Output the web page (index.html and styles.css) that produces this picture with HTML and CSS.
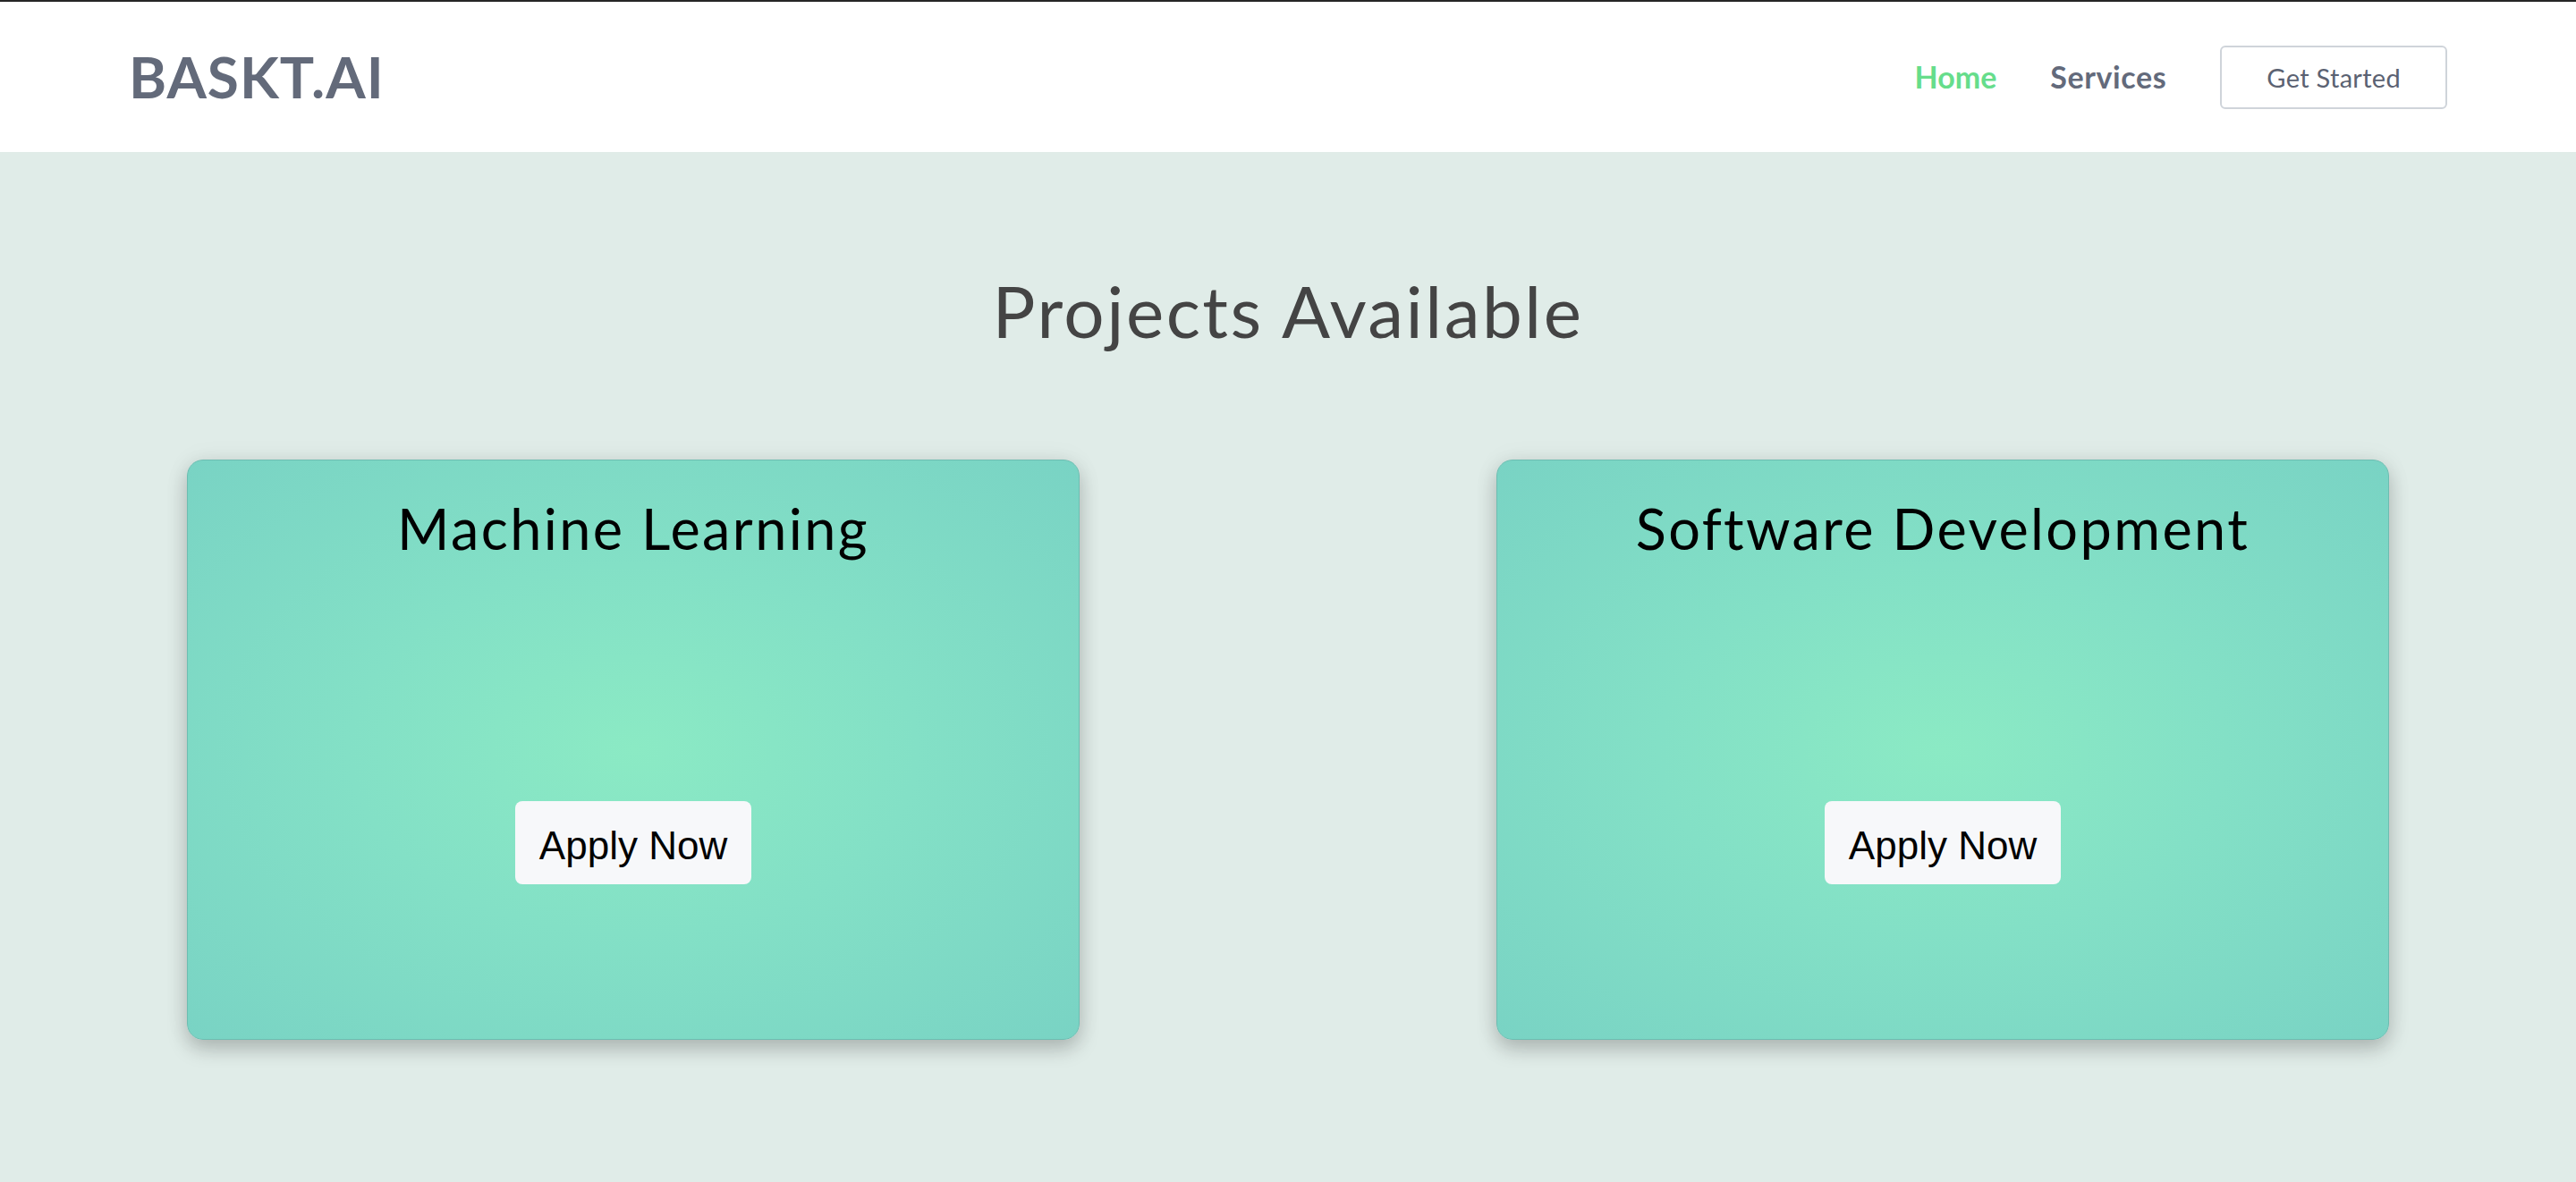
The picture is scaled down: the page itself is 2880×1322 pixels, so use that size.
FILE: index.html
```html
<!DOCTYPE html>
<html lang="en">
<head>
<meta charset="utf-8">
<title>BASKT.AI</title>
<link rel="stylesheet" href="styles.css">
</head>
<body>
<header class="site-header">
  <div class="logo">BASKT.AI</div>
  <nav class="nav">
    <a class="nav-link active" href="#">Home</a>
    <a class="nav-link" href="#">Services</a>
    <a class="btn-outline" href="#">Get Started</a>
  </nav>
</header>
<main class="projects">
  <h1 class="projects-title">Projects Available</h1>
  <div class="card-row">
    <div class="card">
      <h2 class="card-title">Machine Learning</h2>
      <button class="apply-btn">Apply Now</button>
    </div>
    <div class="card">
      <h2 class="card-title">Software Development</h2>
      <button class="apply-btn">Apply Now</button>
    </div>
  </div>
</main>
<section class="next-section"></section>
</body>
</html>
```
FILE: styles.css
```css
* { box-sizing: border-box; }
html, body { margin: 0; padding: 0; }
body {
  background: #e0ece8;
  font-family: Lato, "Open Sans", "Liberation Sans", sans-serif;
  border-top: 2px solid #252525;
  overflow: hidden;
}
.site-header {
  height: 168px;
  background: #ffffff;
  display: flex;
  align-items: center;
  justify-content: space-between;
  padding: 0 144px;
}
.logo {
  font-size: 64px;
  font-weight: 700;
  color: #636a7a;
  letter-spacing: 1px;
  line-height: 1;
}
.nav {
  display: flex;
  align-items: center;
  gap: 60px;
}
.nav-link {
  font-size: 34px;
  font-weight: 700;
  color: #636a7b;
  text-decoration: none;
  line-height: 1;
}
.nav-link.active { color: #66dd8b; letter-spacing: 0; }
.nav-link + .nav-link { letter-spacing: 0.6px; }
.btn-outline {
  display: block;
  border: 2px solid #cfd4da;
  border-radius: 6px;
  padding: 16px 50px;
  font-size: 29px;
  line-height: 35px;
  letter-spacing: 0.3px;
  color: #5b6272;
  text-decoration: none;
}
.projects {
  padding: 137px 0 158px;
}
.projects-title {
  margin: 0;
  text-align: center;
  font-size: 80px;
  font-weight: 400;
  line-height: 80px;
  letter-spacing: 2.5px;
  color: #444444;
}
.card-row {
  margin-top: 127px;
  display: flex;
  justify-content: space-between;
  padding: 0 209px;
}
.card {
  width: 998px;
  height: 649px;
  border: 1px solid #6dbdb1;
  border-radius: 18px;
  background: radial-gradient(ellipse at 50% 50%, #8beac4 0%, #83e0c6 45%, #79d3c4 100%);
  box-shadow: 0 10px 22px rgba(0, 0, 0, 0.22), 0 0 30px rgba(0, 0, 0, 0.05);
  display: flex;
  flex-direction: column;
  align-items: center;
  padding-top: 44px;
}
.card-title {
  margin: 0;
  font-size: 63px;
  font-weight: 400;
  line-height: 63px;
  letter-spacing: 2.4px;
  color: #000000;
}
.apply-btn {
  margin-top: 274px;
  border: none;
  border-radius: 8px;
  background: #f7f8fa;
  font-family: "Liberation Sans", Arial, sans-serif;
  font-size: 44px;
  line-height: 51px;
  padding: 24px 27px 18px;
  color: #000000;
  cursor: pointer;
}
.next-section {
  height: 1px;
  background: #e0ece8;
  box-shadow: 0 0 50px rgba(0, 0, 0, 0.12);
}
```
